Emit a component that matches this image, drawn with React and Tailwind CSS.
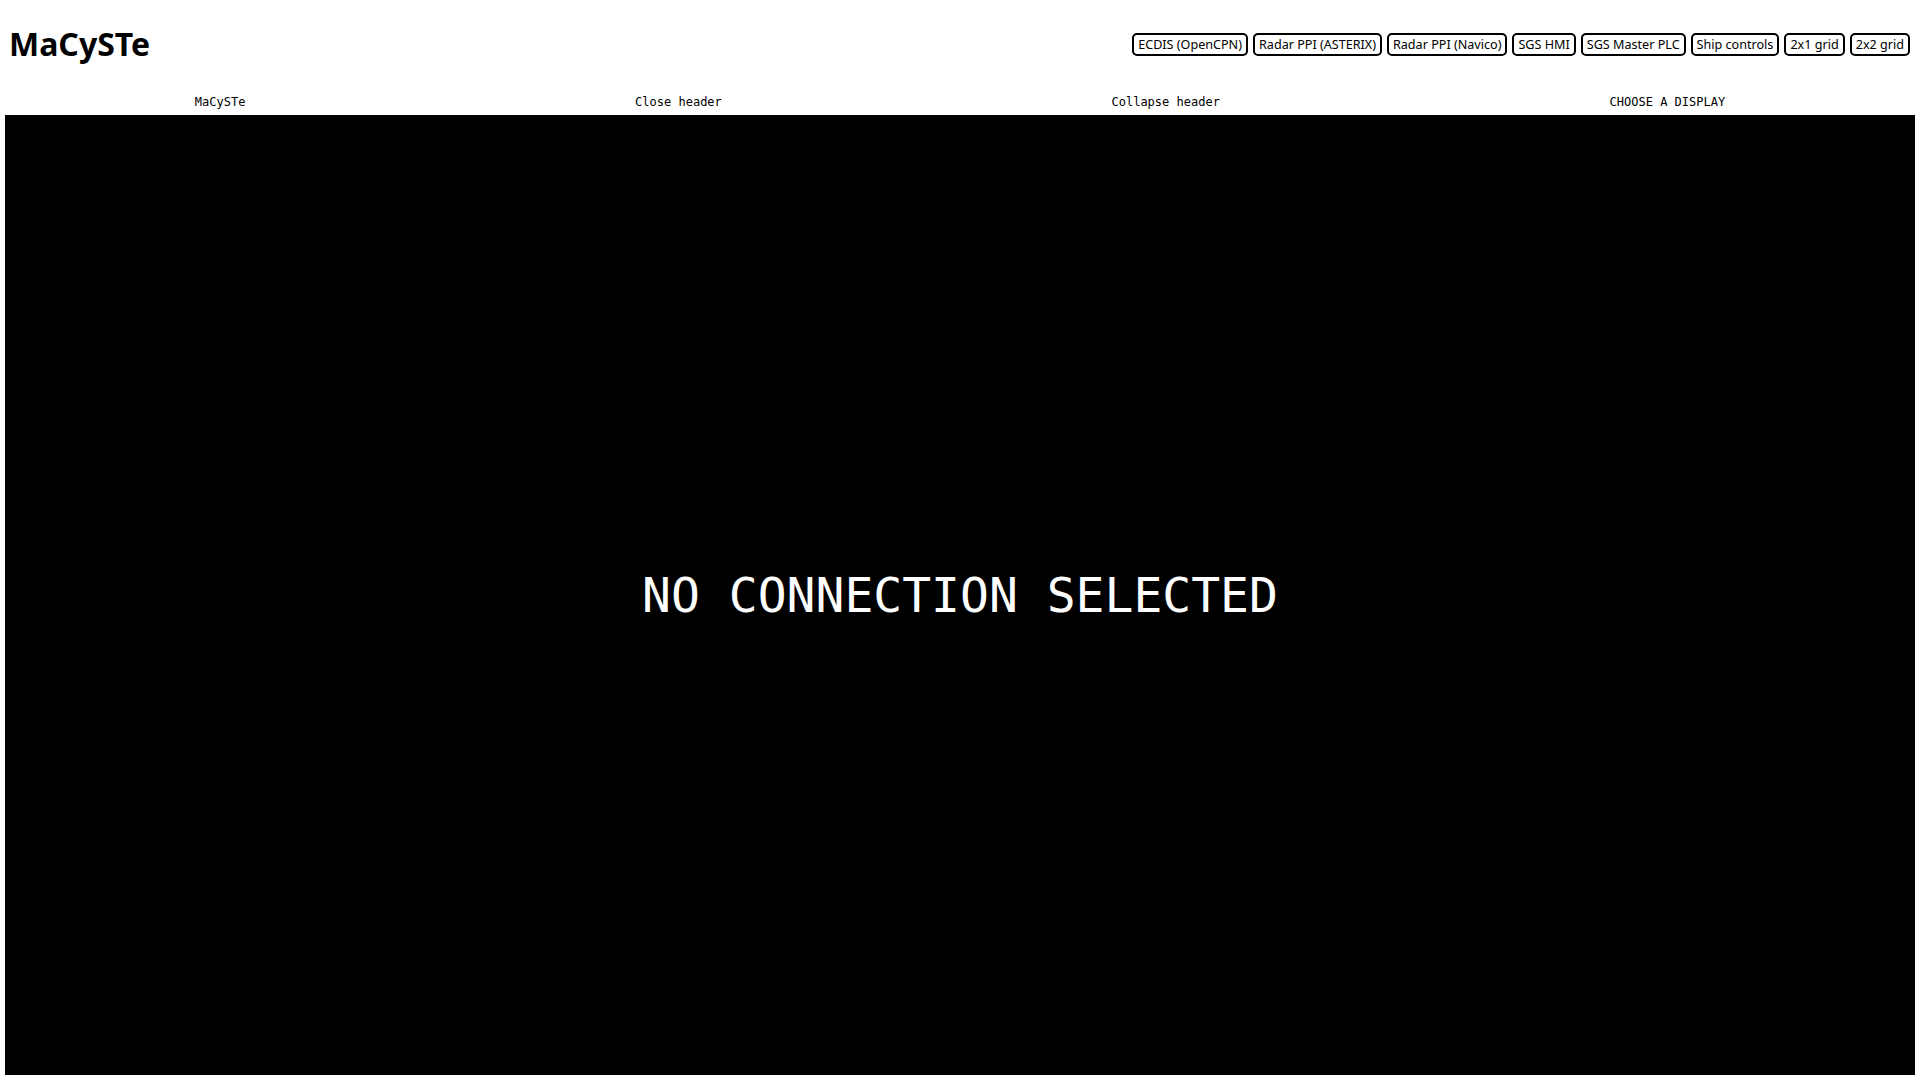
import React from "react";

const buttons = [
  "ECDIS (OpenCPN)",
  "Radar PPI (ASTERIX)",
  "Radar PPI (Navico)",
  "SGS HMI",
  "SGS Master PLC",
  "Ship controls",
  "2x1 grid",
  "2x2 grid",
];

export default function App() {
  return (
    <div className="h-screen w-full flex flex-col bg-white text-black font-['Noto_Sans',sans-serif] overflow-hidden">
      <header className="h-[83px] shrink-0 flex items-center justify-between pl-[9px] pr-[10px] pt-[5px]">
        <h1 className="text-[32px] font-bold leading-[44px] m-0">MaCySTe</h1>
        <div className="flex items-center gap-[5px]">
          {buttons.map((b) => (
            <button
              key={b}
              className="border-2 border-black rounded-[5px] bg-white px-[4px] py-0 h-[23px] text-[12.6px] leading-[17px] font-['Noto_Sans',sans-serif] text-black whitespace-nowrap"
            >
              {b}
            </button>
          ))}
        </div>
      </header>
      <div className="h-[32px] shrink-0 flex justify-around items-start pt-[12px] font-['DejaVu_Sans_Mono',monospace] text-[12px] leading-[14px]">
        <span>MaCySTe</span>
        <span>Close header</span>
        <span>Collapse header</span>
        <span>CHOOSE A DISPLAY</span>
      </div>
      <div className="flex-1 mx-[5px] mb-[5px] bg-black flex items-center justify-center">
        <span className="text-white text-[48px] font-['DejaVu_Sans_Mono',monospace] leading-none">
          NO CONNECTION SELECTED
        </span>
      </div>
    </div>
  );
}
